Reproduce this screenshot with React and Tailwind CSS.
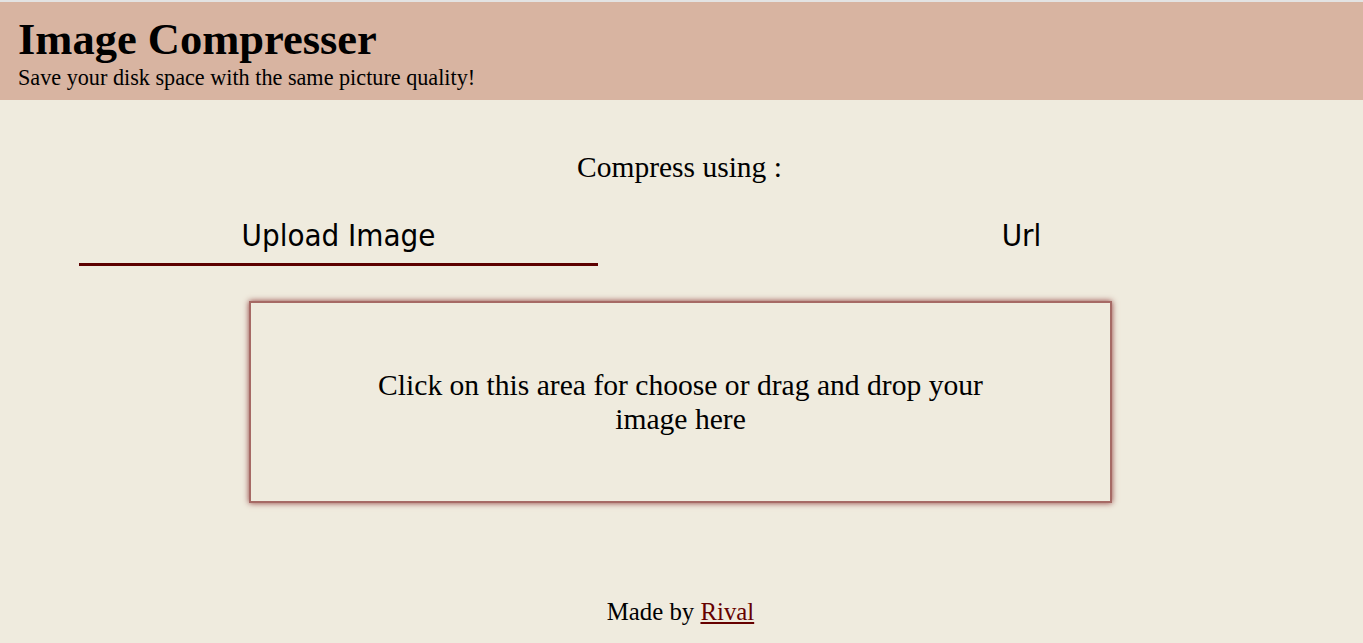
import React, { useState } from 'react';

export default function App() {
  const [tab, setTab] = useState('upload');

  return (
    <div className="min-h-screen w-full bg-[#efebde] font-['Liberation_Serif',serif] text-black border-t-2 border-[#e3e3e3]">
      {/* HEADER */}
      <header className="bg-[#d8b4a1] pt-[15px] pb-[11px] px-[18px]">
        <h1 className="text-[44.5px] font-bold leading-none">Image Compresser</h1>
        <p className="text-[22.2px] leading-none mt-[5px]">Save your disk space with the same picture quality!</p>
      </header>

      {/* MAIN */}
      <main className="flex flex-col items-center">
        <p className="text-[29.5px] leading-none mt-[53px] mr-[4px]">Compress using :</p>

        {/* TABS */}
        <div className="w-full px-[79px] flex justify-between mt-[38px] font-['DejaVu_Sans_Condensed','DejaVu_Sans',sans-serif]">
          <button
            onClick={() => setTab('upload')}
            className={`w-[519px] text-[31px] leading-none pb-[12px] border-b-[3px] ${tab === 'upload' ? 'border-[#5c0000]' : 'border-transparent'}`}
          >
            Upload Image
          </button>
          <button
            onClick={() => setTab('url')}
            className={`w-[519px] mr-[3px] text-[31px] leading-none pb-[12px] border-b-[3px] ${tab === 'url' ? 'border-[#5c0000]' : 'border-transparent'}`}
          >
            Url
          </button>
        </div>

        {/* DROP AREA */}
        <div className="mt-[35px] mr-[2px] w-[863px] h-[202px] border-2 border-[#a66a65] shadow-[0_0_6px_#8e3b3b] flex items-center justify-center px-[110px] cursor-pointer">
          <p className="text-[29.6px] leading-[34px] text-center">
            Click on this area for choose or drag and drop your image here
          </p>
        </div>

        {/* FOOTER */}
        <p className="text-[24.8px] leading-none mt-[97px] pb-[20px] mr-[2px]">
          Made by <a href="#" className="underline text-[#660000]">Rival</a>
        </p>
      </main>
    </div>
  );
}
